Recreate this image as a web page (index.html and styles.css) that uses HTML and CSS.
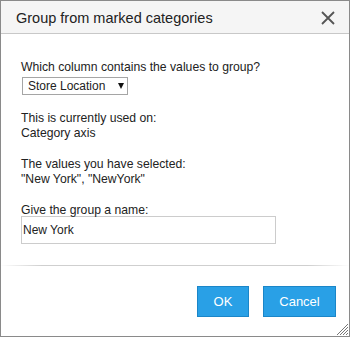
FILE: index.html
```html
<!DOCTYPE html>
<html lang="en">
<head>
  <meta charset="UTF-8">
  <title>Group from marked categories</title>
  <link rel="stylesheet" href="styles.css">
</head>
<body>

  <div class="dialog">
    <div class="dialog-header">
      <span class="dialog-title">Group from marked categories</span>
      <svg class="close-icon" width="14" height="14" viewBox="0 0 14 14">
        <path d="M1 1 L13 13 M13 1 L1 13" stroke="#555" stroke-width="1.8" fill="none"/>
      </svg>
    </div>

    <div class="dialog-body">
      <div class="field-label">Which column contains the values to group?</div>
      <div class="select-box">
        <span>Store Location</span>
        <span class="caret"></span>
      </div>

      <div class="info">
        <div>This is currently used on:</div>
        <div>Category axis</div>
      </div>

      <div class="info">
        <div>The values you have selected:</div>
        <div>"New York", "NewYork"</div>
      </div>

      <div class="info">
        <div>Give the group a name:</div>
        <input type="text" class="name-input" value="New York">
      </div>
    </div>

    <div class="dialog-footer">
      <button class="btn">OK</button>
      <button class="btn">Cancel</button>
    </div>

    <svg class="resize-grip" width="12" height="12" viewBox="0 0 12 12">
      <path d="M12 1 L1 12 M12 4 L4 12 M12 7 L7 12 M12 10 L10 12" stroke="#777" stroke-width="1" fill="none"/>
    </svg>
  </div>

</body>
</html>
```

FILE: styles.css
```css
body {
  margin: 0;
  font-family: "Liberation Sans", Arial, sans-serif;
  color: #222;
  background-color: #fff;
}

.dialog {
  position: relative;
  width: 350px;
  height: 337px;
  box-sizing: border-box;
  border: 1px solid #8a8a8a;
  display: flex;
  flex-direction: column;
  background-color: #fff;
}

.dialog-header {
  height: 32px;
  display: flex;
  align-items: center;
  justify-content: space-between;
  padding: 0 14px 0 15px;
  background-color: #f5f5f5;
  border-bottom: 1px solid #c8c8c8;
}

.dialog-title {
  font-size: 14.5px;
  color: #222;
  margin-top: 1px;
}

.close-icon {
  display: block;
  margin-top: 1px;
}

.dialog-body {
  flex: 1;
  padding: 26px 20px 20px 20px;
  font-size: 12.2px;
  line-height: 15px;
}

.select-box {
  display: inline-flex;
  align-items: center;
  justify-content: space-between;
  box-sizing: border-box;
  width: 106px;
  height: 18px;
  margin: 2px 0 0 1px;
  padding: 0 3px 0 5px;
  border: 1px solid #a5a5a5;
  font-size: 12px;
}

.caret {
  width: 0;
  height: 0;
  border-left: 3.5px solid transparent;
  border-right: 3.5px solid transparent;
  border-top: 6px solid #111;
}

.info {
  margin-top: 16px;
}

.info:nth-of-type(2) {
  margin-top: 17px;
}

.name-input {
  display: block;
  box-sizing: border-box;
  width: 255px;
  height: 28px;
  margin-top: -2px;
  padding: 0 1px;
  border: 1px solid #ccc;
  font-family: "Liberation Sans", Arial, sans-serif;
  font-size: 12px;
  color: #222;
  outline: none;
}

.dialog-footer {
  display: flex;
  justify-content: flex-end;
  gap: 14px;
  padding: 20px 13px 19px 0;
  border-top: 1px solid transparent;
  border-image: linear-gradient(to right, rgba(200,200,200,0), #cfcfcf 12%, #cfcfcf 88%, rgba(200,200,200,0)) 1;
}

.btn {
  height: 31px;
  padding: 0 17px;
  background-color: #29a0e6;
  border: 1px solid #1b86c8;
  color: #fff;
  font-family: "Liberation Sans", Arial, sans-serif;
  font-size: 13px;
  cursor: pointer;
}

.btn:first-child {
  width: 52px;
  padding: 0;
}

.btn:last-child {
  width: 73px;
  padding: 0;
}

.resize-grip {
  position: absolute;
  right: 1px;
  bottom: 1px;
}
```
